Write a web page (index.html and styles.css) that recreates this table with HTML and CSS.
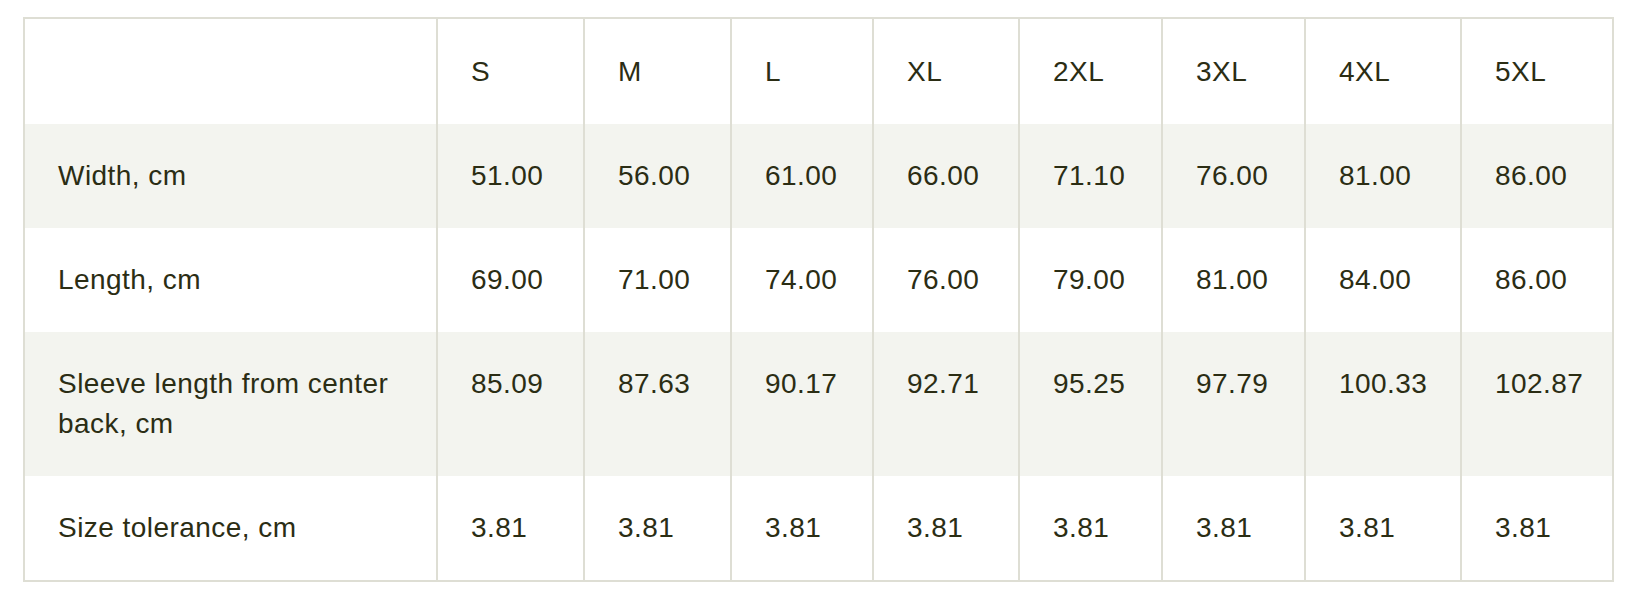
FILE: index.html
```html
<!DOCTYPE html>
<html lang="en">
<head>
<meta charset="utf-8">
<title>Size guide</title>
<link rel="stylesheet" href="styles.css">
</head>
<body>
<table class="size-table">
  <colgroup>
    <col class="c-label">
    <col class="c-s">
    <col class="c-m">
    <col class="c-l">
    <col class="c-xl">
    <col class="c-2xl">
    <col class="c-3xl">
    <col class="c-4xl">
    <col class="c-5xl">
  </colgroup>
  <thead>
    <tr>
      <th></th>
      <th>S</th>
      <th>M</th>
      <th>L</th>
      <th>XL</th>
      <th>2XL</th>
      <th>3XL</th>
      <th>4XL</th>
      <th>5XL</th>
    </tr>
  </thead>
  <tbody>
    <tr class="alt">
      <td>Width, cm</td>
      <td>51.00</td>
      <td>56.00</td>
      <td>61.00</td>
      <td>66.00</td>
      <td>71.10</td>
      <td>76.00</td>
      <td>81.00</td>
      <td>86.00</td>
    </tr>
    <tr>
      <td>Length, cm</td>
      <td>69.00</td>
      <td>71.00</td>
      <td>74.00</td>
      <td>76.00</td>
      <td>79.00</td>
      <td>81.00</td>
      <td>84.00</td>
      <td>86.00</td>
    </tr>
    <tr class="alt">
      <td>Sleeve length from center back, cm</td>
      <td>85.09</td>
      <td>87.63</td>
      <td>90.17</td>
      <td>92.71</td>
      <td>95.25</td>
      <td>97.79</td>
      <td>100.33</td>
      <td>102.87</td>
    </tr>
    <tr>
      <td>Size tolerance, cm</td>
      <td>3.81</td>
      <td>3.81</td>
      <td>3.81</td>
      <td>3.81</td>
      <td>3.81</td>
      <td>3.81</td>
      <td>3.81</td>
      <td>3.81</td>
    </tr>
  </tbody>
</table>
</body>
</html>
```
FILE: styles.css
```css
html, body {
  margin: 0;
  padding: 0;
  background: #ffffff;
}

body {
  padding: 17px 0 0 23px;
  font-family: "Liberation Sans", Arial, sans-serif;
  color: #2b2d14;
}

.size-table {
  width: 1591px;
  table-layout: fixed;
  border-collapse: separate;
  border-spacing: 0;
  border: 2px solid #deded4;
  font-size: 28px;
  line-height: 40px;
  letter-spacing: 0.45px;
}

.c-label { width: 411px; }
.c-s { width: 147px; }
.c-m { width: 147px; }
.c-l { width: 142px; }
.c-xl { width: 146px; }
.c-2xl { width: 143px; }
.c-3xl { width: 143px; }
.c-4xl { width: 156px; }
.c-5xl { width: 152px; }

.size-table th,
.size-table td {
  padding: 32px 33px;
  text-align: left;
  vertical-align: top;
  font-weight: normal;
}

.size-table th {
  padding-top: 33px;
}

.size-table th + th,
.size-table td + td {
  border-left: 2px solid #deded4;
}

.size-table tr.alt {
  background: #f3f4ef;
}
```
